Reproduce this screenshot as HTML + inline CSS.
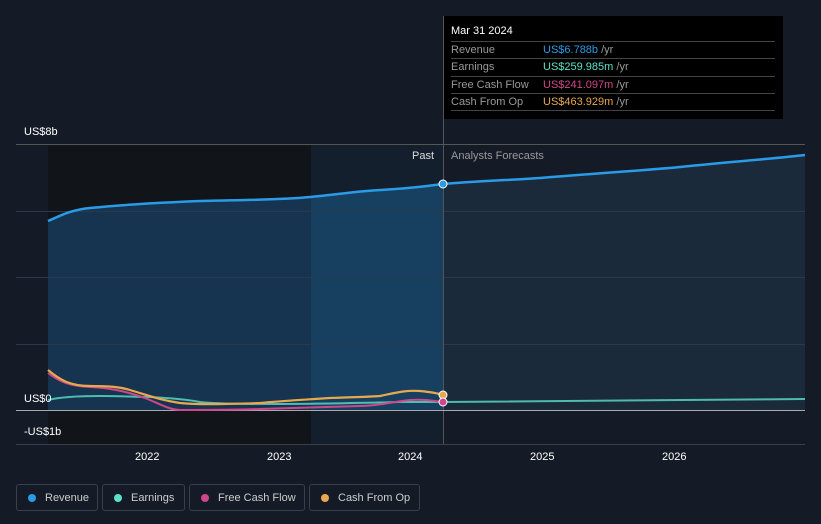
<!DOCTYPE html><html><head><style>
body{margin:0;width:821px;height:524px;background:#151b26;font-family:"Liberation Sans",sans-serif;overflow:hidden;position:relative}
.t{position:absolute;color:#fff;font-size:11px}
.tip{position:absolute;left:444px;top:16px;width:339px;height:103px;background:#000;font-size:11px}
.tip .r{position:absolute;left:7px;width:324px;border-top:1px solid #444;height:17px;line-height:17px;color:#999}
.tip .r span{position:absolute;left:92px}
.leg{position:absolute;top:484px;height:27px;border:1px solid #3a3f4a;border-radius:3px;color:#ccc;font-size:11px;line-height:27px;box-sizing:border-box}
.leg i{position:absolute;left:11px;top:9px;width:8px;height:8px;border-radius:50%}
</style></head><body>
<svg width="821" height="524" style="position:absolute;left:0;top:0">
<defs>
<clipPath id="cp"><rect x="0" y="0" width="443" height="524"/></clipPath>
<clipPath id="cf"><rect x="443" y="0" width="400" height="524"/></clipPath>
<clipPath id="ch"><rect x="311" y="0" width="132" height="524"/></clipPath>
</defs>
<rect x="48" y="144" width="263" height="300" fill="#111419"/>
<rect x="311" y="144" width="133" height="300" fill="#131f2c"/>
<path id="ar" d="M48,221 C60,216 70,210 90,208 C120,205 150,203 200,201 C240,200 280,200 310,197 C340,194 360,191 380,190 C400,189 420,187 443,184 C480,181 510,180 540,178 C600,173 650,170 680,167 C740,161 780,158 805,155 L805,410 L48,410Z" fill="#163350" clip-path="url(#cp)"/>
<path d="M48,221 C60,216 70,210 90,208 C120,205 150,203 200,201 C240,200 280,200 310,197 C340,194 360,191 380,190 C400,189 420,187 443,184 C480,181 510,180 540,178 C600,173 650,170 680,167 C740,161 780,158 805,155 L805,410 L48,410Z" fill="#173f60" clip-path="url(#ch)"/>
<path d="M48,221 C60,216 70,210 90,208 C120,205 150,203 200,201 C240,200 280,200 310,197 C340,194 360,191 380,190 C400,189 420,187 443,184 C480,181 510,180 540,178 C600,173 650,170 680,167 C740,161 780,158 805,155 L805,410 L48,410Z" fill="#1b2a3b" clip-path="url(#cf)"/>
<g stroke="#2a3a4c" stroke-width="1"><line x1="16" y1="211.5" x2="805" y2="211.5"/><line x1="16" y1="277.5" x2="805" y2="277.5"/><line x1="16" y1="344.5" x2="805" y2="344.5"/></g>
<line x1="16" y1="144.5" x2="805" y2="144.5" stroke="#555"/><line x1="16" y1="444.5" x2="805" y2="444.5" stroke="#3a3f4a"/>
<line x1="443.5" y1="16" x2="443.5" y2="444" stroke="#555"/>
<path d="M48,221 C60,216 70,210 90,208 C120,205 150,203 200,201 C240,200 280,200 310,197 C340,194 360,191 380,190 C400,189 420,187 443,184 C480,181 510,180 540,178 C600,173 650,170 680,167 C740,161 780,158 805,155" fill="none" stroke="#2a9be6" stroke-width="2.5"/>
<line x1="16" y1="410.5" x2="805" y2="410.5" stroke="#aaa"/>
<path d="M48,400 C60,397 80,396 100,396 C120,396 135,397 150,397 C170,398 185,399 200,402 C220,404 250,404 280,404 C320,404 360,403 400,402 C420,402 430,402 443,402 L805,399" fill="none" stroke="#5de0c8" stroke-width="2" opacity=".8"/>
<path d="M48,373 C60,382 70,386 90,387 C110,388 125,391 145,398 C160,404 170,410 180,410 C200,410 230,410 260,409 C300,408 330,407 360,406 C380,406 390,402 410,400 C425,399 435,401 443,402" fill="none" stroke="#d0468a" stroke-width="2"/>
<path d="M48,370 C60,380 70,386 90,386 C110,386 120,387 130,390 C150,396 160,400 180,403 C200,405 230,404 260,403 C280,401 300,400 330,398 C350,397 370,397 380,396 C395,393 405,390 420,391 C430,392 437,393 443,395" fill="none" stroke="#e8a94e" stroke-width="2.2"/>
<circle cx="443" cy="184" r="4" fill="#2a9be6" stroke="#fff" stroke-width="1"/>
<circle cx="443" cy="395" r="4" fill="#e8a94e" stroke="#fff" stroke-width="1"/>
<circle cx="443" cy="402" r="4" fill="#d0468a" stroke="#fff" stroke-width="1"/>
</svg>
<div class="t" style="left:24px;top:126px">US$8b</div>
<div class="t" style="left:24px;top:393px">US$0</div>
<div class="t" style="left:24px;top:426px">-US$1b</div>
<div class="t" style="left:412px;top:150px;color:#ddd">Past</div>
<div class="t" style="left:451px;top:150px;color:#999">Analysts Forecasts</div>
<div class="t" style="left:135px;top:451px">2022</div>
<div class="t" style="left:267px;top:451px">2023</div>
<div class="t" style="left:398px;top:451px">2024</div>
<div class="t" style="left:530px;top:451px">2025</div>
<div class="t" style="left:662px;top:451px">2026</div>
<div class="tip">
<div style="position:absolute;left:7px;top:9px;color:#fff">Mar 31 2024</div>
<div class="r" style="top:25px">Revenue<span><b style="font-weight:normal;color:#2a9be6">US$6.788b</b> /yr</span></div>
<div class="r" style="top:42px">Earnings<span><b style="font-weight:normal;color:#5de0c8">US$259.985m</b> /yr</span></div>
<div class="r" style="top:60px">Free Cash Flow<span><b style="font-weight:normal;color:#d0468a">US$241.097m</b> /yr</span></div>
<div class="r" style="top:77px">Cash From Op<span><b style="font-weight:normal;color:#e8a94e">US$463.929m</b> /yr</span></div>
<div class="r" style="top:94px;height:0"></div>
</div>
<div class="leg" style="left:16px;width:82px"><i style="background:#2a9be6"></i><span style="position:absolute;left:28px">Revenue</span></div>
<div class="leg" style="left:102px;width:83px"><i style="background:#5de0c8"></i><span style="position:absolute;left:28px">Earnings</span></div>
<div class="leg" style="left:189px;width:116px"><i style="background:#d0468a"></i><span style="position:absolute;left:28px">Free Cash Flow</span></div>
<div class="leg" style="left:309px;width:111px"><i style="background:#e8a94e"></i><span style="position:absolute;left:28px">Cash From Op</span></div>
</body></html>
